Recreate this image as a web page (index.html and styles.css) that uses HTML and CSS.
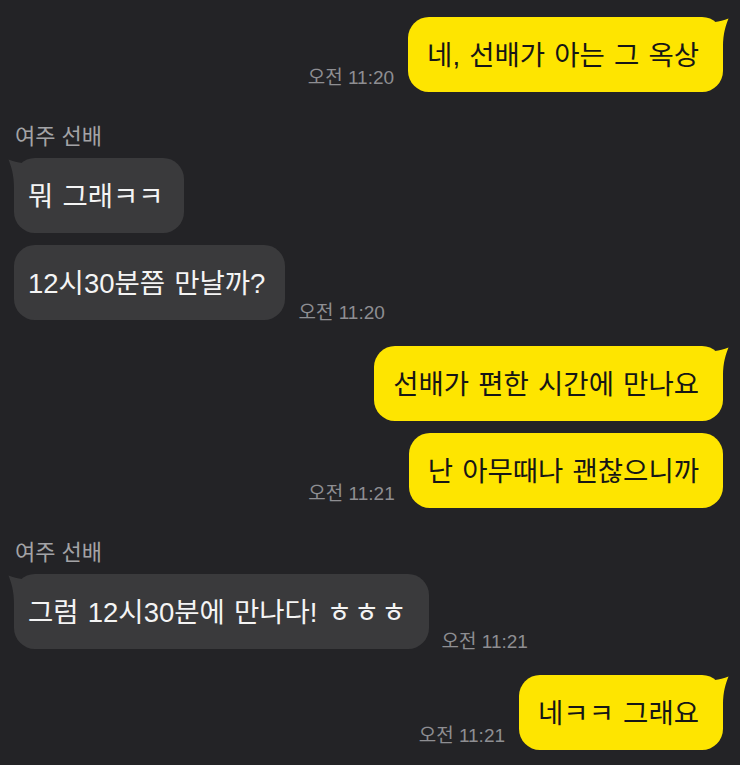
FILE: index.html
```html
<!DOCTYPE html>
<html lang="ko">
<head>
  <meta charset="UTF-8">
  <meta name="viewport" content="width=device-width, initial-scale=1.0">
  <title>채팅</title>
  <link rel="stylesheet" href="styles.css">
</head>
<body>
  <div class="chat">
    <div class="group mine">
      <div class="row">
        <span class="time">오전 11:20</span>
        <div class="bubble tail">네, 선배가 아는 그 옥상</div>
      </div>
    </div>

    <div class="group theirs">
      <div class="name">여주 선배</div>
      <div class="row">
        <div class="bubble tail">뭐 그래ㅋㅋ</div>
      </div>
      <div class="row">
        <div class="bubble">12시30분쯤 만날까?</div>
        <span class="time">오전 11:20</span>
      </div>
    </div>

    <div class="group mine">
      <div class="row">
        <div class="bubble tail">선배가 편한 시간에 만나요</div>
      </div>
      <div class="row">
        <span class="time">오전 11:21</span>
        <div class="bubble">난 아무때나 괜찮으니까</div>
      </div>
    </div>

    <div class="group theirs">
      <div class="name">여주 선배</div>
      <div class="row">
        <div class="bubble tail">그럼 12시30분에 만나다! <span class="jamo">ㅎㅎㅎ</span></div>
        <span class="time">오전 11:21</span>
      </div>
    </div>

    <div class="group mine">
      <div class="row">
        <span class="time">오전 11:21</span>
        <div class="bubble tail">네ㅋㅋ 그래요</div>
      </div>
    </div>
  </div>
</body>
</html>
```

FILE: styles.css
```css
body {
  margin: 0;
  padding: 0;
  background-color: #232326;
  font-family: "Liberation Sans", "Noto Sans CJK KR", sans-serif;
}
.chat {
  padding: 17px 17px 0 14px;
}
.group {
  display: flex;
  flex-direction: column;
  gap: 12px;
}
.group + .group {
  margin-top: 26px;
}
.mine {
  align-items: flex-end;
}
.theirs {
  align-items: flex-start;
}
.row {
  display: flex;
  align-items: flex-end;
}
.name {
  font-size: 22px;
  line-height: 30px;
  color: #a3a3a6;
  margin: 4px 0 -6px 1px;
}
.bubble {
  position: relative;
  font-size: 27.5px;
  line-height: 35px;
  word-spacing: 1.5px;
  padding: 21px 20px 19px;
  border-radius: 21px;
  white-space: nowrap;
}
.mine .bubble {
  background-color: #fee500;
  color: #161616;
  padding-left: 19px;
  padding-right: 24px;
}
.theirs .bubble {
  background-color: #3a3a3c;
  color: #f4f4f4;
  padding-left: 14px;
  padding-right: 20px;
}
.jamo {
  letter-spacing: 2px;
}
.tail::before {
  content: "";
  position: absolute;
  top: 0;
  width: 14px;
  height: 30px;
}
.mine .tail::before {
  right: -6px;
  background-color: #fee500;
  clip-path: path("M0 5 C4 4.5 9 3.5 13.5 1.5 C11 8 8 16 8 30 L0 30 Z");
}
.theirs .tail::before {
  left: -6px;
  background-color: #3a3a3c;
  clip-path: path("M14 5 C10 4.5 5 3.5 0.5 1.5 C3 8 6 16 6 30 L14 30 Z");
}
.time {
  font-size: 19px;
  line-height: 20px;
  color: #8e8e92;
  white-space: nowrap;
}
.mine .time {
  margin-right: 14px;
  margin-bottom: 4px;
}
.theirs .time {
  margin-left: 13px;
  margin-bottom: -3px;
}
```
